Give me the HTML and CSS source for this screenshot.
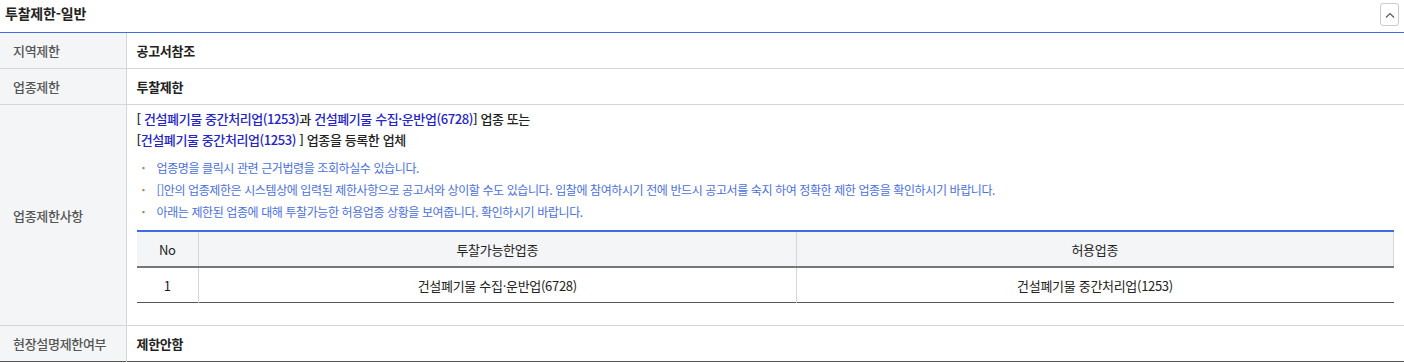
FILE: index.html
```html
<!DOCTYPE html>
<html lang="ko">
<head>
    <meta charset="UTF-8">
    <title>투찰제한-일반</title>
    <link rel="stylesheet" href="styles.css">
</head>
<body>
    <div class="section-head">
        <h2>투찰제한-일반</h2>
        <button class="fold-btn" type="button" aria-label="접기">
            <svg width="10" height="6" viewBox="0 0 10 6"><path d="M1 5.5 L5 1.5 L9 5.5" fill="none" stroke="#555" stroke-width="1.1"/></svg>
        </button>
    </div>

    <table class="info">
        <colgroup>
            <col class="label-col">
            <col>
        </colgroup>
        <tr>
            <th>지역제한</th>
            <td class="strong">공고서참조</td>
        </tr>
        <tr>
            <th>업종제한</th>
            <td class="strong">투찰제한</td>
        </tr>
        <tr>
            <th>업종제한사항</th>
            <td class="detail">
                <p class="rule">[ <a href="#">건설폐기물 중간처리업(1253)</a>과 <a href="#">건설폐기물 수집·운반업(6728)</a>] 업종 또는<br>[<a href="#">건설폐기물 중간처리업(1253)</a> ] 업종을 등록한 업체</p>
                <ul class="notes">
                    <li>업종명을 클릭시 관련 근거법령을 조회하실수 있습니다.</li>
                    <li>[]안의 업종제한은 시스템상에 입력된 제한사항으로 공고서와 상이할 수도 있습니다. 입찰에 참여하시기 전에 반드시 공고서를 숙지 하여 정확한 제한 업종을 확인하시기 바랍니다.</li>
                    <li>아래는 제한된 업종에 대해 투찰가능한 허용업종 상황을 보여줍니다. 확인하시기 바랍니다.</li>
                </ul>
                <table class="allow">
                    <colgroup>
                        <col class="no-col">
                        <col>
                        <col>
                    </colgroup>
                    <tr>
                        <th>No</th>
                        <th>투찰가능한업종</th>
                        <th>허용업종</th>
                    </tr>
                    <tr>
                        <td>1</td>
                        <td>건설폐기물 수집·운반업(6728)</td>
                        <td>건설폐기물 중간처리업(1253)</td>
                    </tr>
                </table>
            </td>
        </tr>
        <tr>
            <th>현장설명제한여부</th>
            <td class="strong">제한안함</td>
        </tr>
    </table>
</body>
</html>
```

FILE: styles.css
```css
body {
    margin: 0;
    font-family: "Noto Sans CJK KR", "Noto Sans", sans-serif;
    font-size: 13px;
    color: #222;
    background: #fff;
}
.section-head {
    display: flex;
    align-items: center;
    justify-content: space-between;
    height: 32px;
    padding: 0 5px 0 5px;
    border-bottom: 1px solid #3d6fe3;
}
.section-head h2 {
    margin: 0;
    font-size: 14px;
    font-weight: bold;
    color: #222;
    margin-top: -6px;
    letter-spacing: -0.2px;
}
.fold-btn {
    width: 19px;
    height: 23px;
    margin-top: -3px;
    padding: 0;
    border: 1px solid #ccc;
    border-radius: 3px;
    background: #fff;
    display: flex;
    align-items: center;
    justify-content: center;
}
.info {
    width: 100%;
    border-collapse: collapse;
    table-layout: fixed;
    border-bottom: 1px solid #555;
    letter-spacing: -0.3px;
}
.label-col {
    width: 126px;
}
.info th {
    background: #f4f5f7;
    color: #555;
    font-weight: 500;
    text-align: left;
    padding: 0 0 0 13px;
    height: 35px;
    border-bottom: 1px solid #d6d6d6;
    border-right: 1px solid #d6d6d6;
}
.info td {
    padding: 0 10px 0 10px;
    height: 35px;
    border-bottom: 1px solid #d6d6d6;
}
.info tr:last-child th,
.info tr:last-child td {
    border-bottom: none;
}
.strong {
    font-weight: bold;
}
.info td.detail {
    padding: 3px 10px 22px 10px;
}
.rule {
    margin: 0;
    line-height: 21px;
    font-weight: 500;
    color: #222;
    letter-spacing: -0.4px;
}
.rule a {
    color: #2424c8;
    text-decoration: none;
}
.notes {
    list-style: none;
    margin: 7px 0 7px 0;
    padding: 0 0 0 5px;
    font-size: 12px;
    line-height: 22px;
    color: #4a6fe0;
    letter-spacing: -0.4px;
}
.notes li {
    position: relative;
    padding-left: 15px;
}
.notes li::before {
    content: "·";
    position: absolute;
    left: 0;
    color: #a08060;
    font-weight: bold;
}
.allow {
    width: 100%;
    border-collapse: collapse;
    table-layout: fixed;
    border-top: 2px solid #3d6fe3;
    border-bottom: 1px solid #555;
    letter-spacing: -0.3px;
}
.no-col {
    width: 62px;
}
.allow th,
.allow td {
    text-align: center;
    font-size: 13px;
    height: 34px;
    padding: 0;
    color: #222;
    border-left: 1px solid #d6d6d6;
}
.allow th:first-child,
.allow td:first-child {
    border-left: none;
}
.allow th {
    background: #f4f5f7;
    font-weight: normal;
    border-bottom: 2px solid #777;
}
.allow td {
    border-bottom: none;
}
```
